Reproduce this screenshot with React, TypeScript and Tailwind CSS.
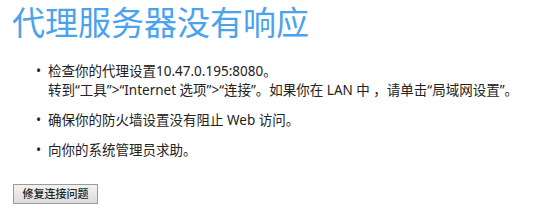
const font = { fontFamily: '"Noto Sans", "Noto Sans CJK SC", sans-serif' };

function Item({ children }: { children: React.ReactNode }) {
  return (
    <li className="flex">
      <span className="w-[48px] shrink-0 text-right pr-[7px] text-[#222]">•</span>
      <div>{children}</div>
    </li>
  );
}

export default function App() {
  return (
    <div className="w-[554px] h-[209px] bg-white overflow-hidden" style={font}>
      <h1 className="pl-[12px] pt-[4px] text-[33px] leading-[38px] text-[#4aa3ee] font-normal">
        代理服务器没有响应
      </h1>

      <ul className="mt-[20px] text-[13.5px] leading-[19px] text-[#222] space-y-[11px]">
        <Item>
          <div>检查你的代理设置10.47.0.195:8080。</div>
          <div>转到“工具”&gt;“Internet 选项”&gt;“连接”。如果你在 LAN 中 ，请单击“局域网设置”。</div>
        </Item>
        <Item>确保你的防火墙设置没有阻止 Web 访问。</Item>
        <Item>向你的系统管理员求助。</Item>
      </ul>

      <div className="mt-[20px] pl-[13px]">
        <button className="w-[85px] h-[20px] border border-[#9a9a9a] bg-gradient-to-b from-[#f2f2f2] to-[#dcdcdc] text-[11px] leading-[18px] text-[#222] font-medium">
          修复连接问题
        </button>
      </div>
    </div>
  );
}
